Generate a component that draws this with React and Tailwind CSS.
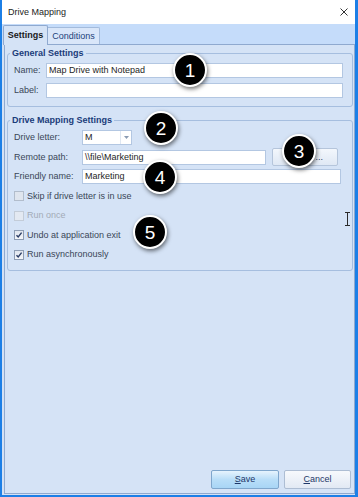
import React from 'react';

function TextBox({ value, className = '' }) {
    return (
        <div className={`h-[15px] bg-white border border-[#b3c7e2] flex items-center px-[2px] text-[#1e1e1e] ${className}`}>
            {value}
        </div>
    );
}

function CheckBox({ checked, disabled, label }) {
    return (
        <div className="h-[19.5px] flex items-center">
            <div
                className={`w-[10px] h-[10px] border flex items-center justify-center ${
                    disabled
                        ? 'border-[#c3ccd8] bg-[#e3e9f2]'
                        : checked
                        ? 'border-[#8e9db4] bg-gradient-to-b from-[#dfe5ee] to-[#f4f6fa]'
                        : 'border-[#b2bdcc] bg-[#dfe5ee]'
                }`}
            >
                {checked && (
                    <svg width="8" height="8" viewBox="0 0 8 8">
                        <path d="M1.5 4.2 L3.2 6 L6.6 1.6" fill="none" stroke="#2b3d66" strokeWidth="1.4" />
                    </svg>
                )}
            </div>
            <span className={`ml-[3px] ${disabled ? 'text-[#a3abb6]' : 'text-[#3a4656]'}`}>{label}</span>
        </div>
    );
}

function Row({ label, width, children }) {
    return (
        <div className="h-[19.5px] flex items-center">
            <span className={`text-[#3a4656] shrink-0 ${width}`}>{label}</span>
            {children}
        </div>
    );
}

export default function App() {
    return (
        <div className="w-[358px] h-[497px] bg-[#1c7fe6] pl-[2px] pr-[3px] pb-[2px] flex flex-col relative overflow-hidden font-[family-name:Liberation_Sans,Arial,sans-serif] text-[9px] leading-[11px]">
            {/* title bar */}
            <div className="h-[24px] shrink-0 bg-white flex items-center justify-between pl-[6px] pr-[7px]">
                <span className="text-[#1c1c1c] text-[9px]">Drive Mapping</span>
                <svg width="8" height="8" viewBox="0 0 8 8">
                    <path d="M0.5 0.5 L7.5 7.5 M7.5 0.5 L0.5 7.5" stroke="#333" strokeWidth="1" />
                </svg>
            </div>

            <div className="flex-1 bg-[#d3e1f5] flex flex-col">
                {/* tabs */}
                <div className="h-[20px] shrink-0 bg-[#c5dcfa] flex items-end pl-[1px]">
                    <div className="relative z-10 -mb-[1px] h-[20px] w-[45px] bg-[#d5e3f6] border border-b-0 border-[#8fa9cf] rounded-t-[2px] flex items-center justify-center font-bold text-[#1a1a1a]">
                        Settings
                    </div>
                    <div className="h-[17px] w-[52px] bg-[#d9e6f9] border border-b-0 border-l-0 border-[#a3bbdc] rounded-tr-[2px] flex items-center justify-center text-[#23427a]">
                        Conditions
                    </div>
                </div>

                {/* tab page */}
                <div className="flex-1 ml-[2px] mb-[1px] border border-[#8fa9cf] bg-[#d5e3f6] flex flex-col pl-[2px] pr-[1px] pt-[2px]">
                    <fieldset className="border border-[#a6bedf] rounded-[3px] pl-[6px] pr-[9px] pb-[6px]">
                        <legend className="-ml-[4px] px-[2px] font-bold text-[#1b3c7a] text-[9px] leading-[12px]">General Settings</legend>
                        <div className="mt-[2px]">
                            <Row label="Name:" width="w-[32px]">
                                <TextBox value="Map Drive with Notepad" className="flex-1" />
                            </Row>
                            <Row label="Label:" width="w-[32px]">
                                <TextBox value="" className="flex-1" />
                            </Row>
                        </div>
                    </fieldset>

                    <fieldset className="mt-[7px] border border-[#a6bedf] rounded-[3px] pl-[6px] pr-[11px] pb-[5px]">
                        <legend className="-ml-[4px] px-[2px] font-bold text-[#1b3c7a] text-[9px] leading-[12px]">Drive Mapping Settings</legend>
                        <div className="mt-[2px]">
                            <Row label="Drive letter:" width="w-[68px]">
                                <div className="h-[15px] w-[50px] bg-white border border-[#b3c7e2] flex items-center">
                                    <span className="flex-1 pl-[2px] text-[#1e1e1e]">M</span>
                                    <div className="w-[11px] h-full border-l border-[#dfe7f2] flex items-center justify-center">
                                        <svg width="5" height="3" viewBox="0 0 5 3">
                                            <path d="M0 0 H5 L2.5 3 Z" fill="#8a9bb3" />
                                        </svg>
                                    </div>
                                </div>
                            </Row>
                            <Row label="Remote path:" width="w-[68px]">
                                <TextBox value="\\file\Marketing" className="w-[184px]" />
                                <div className="ml-[6px] w-[66px] h-[18px] border border-[#b5c5db] rounded-[2px] bg-gradient-to-b from-[#f3f7fc] to-[#dfe8f4] flex items-center justify-end pr-[14px] text-[#1e3768]">
                                    ...
                                </div>
                            </Row>
                            <Row label="Friendly name:" width="w-[68px]">
                                <TextBox value="Marketing" className="flex-1" />
                            </Row>
                            <CheckBox label="Skip if drive letter is in use" />
                            <CheckBox label="Run once" disabled />
                            <CheckBox label="Undo at application exit" checked />
                            <CheckBox label="Run asynchronously" checked />
                        </div>
                    </fieldset>

                    <div className="mt-auto flex justify-end gap-[5px] pb-[4px] pr-[2px]">
                        <div className="w-[68px] h-[19px] border border-[#7fa6cc] rounded-[2px] bg-gradient-to-b from-[#e6f3fd] via-[#b9def8] to-[#a8d5f5] flex items-center justify-center text-[#1e3768]">
                            <span><span className="underline">S</span>ave</span>
                        </div>
                        <div className="w-[67px] h-[19px] border border-[#adbdd3] rounded-[2px] bg-gradient-to-b from-[#f7f9fc] to-[#e2e9f4] flex items-center justify-center text-[#1e3768]">
                            <span><span className="underline">C</span>ancel</span>
                        </div>
                    </div>
                </div>
            </div>

            {/* annotation badges */}
            <div className="absolute left-[173px] top-[53px] w-[34px] h-[34px] rounded-full bg-black border-[2.5px] border-white shadow-[1px_2px_4px_rgba(0,0,0,0.55)] flex items-center justify-center text-white text-[19px] leading-none">1</div>
            <div className="absolute left-[144px] top-[111px] w-[34px] h-[34px] rounded-full bg-black border-[2.5px] border-white shadow-[1px_2px_4px_rgba(0,0,0,0.55)] flex items-center justify-center text-white text-[19px] leading-none">2</div>
            <div className="absolute left-[282px] top-[134px] w-[34px] h-[34px] rounded-full bg-black border-[2.5px] border-white shadow-[1px_2px_4px_rgba(0,0,0,0.55)] flex items-center justify-center text-white text-[19px] leading-none">3</div>
            <div className="absolute left-[143px] top-[160px] w-[34px] h-[34px] rounded-full bg-black border-[2.5px] border-white shadow-[1px_2px_4px_rgba(0,0,0,0.55)] flex items-center justify-center text-white text-[19px] leading-none">4</div>
            <div className="absolute left-[133px] top-[215px] w-[34px] h-[34px] rounded-full bg-black border-[2.5px] border-white shadow-[1px_2px_4px_rgba(0,0,0,0.55)] flex items-center justify-center text-white text-[19px] leading-none">5</div>

            {/* text cursor */}
            <svg className="absolute left-[344px] top-[212px]" width="7" height="14" viewBox="0 0 7 14">
                <path d="M1 0.5 H6 M1 13.5 H6 M3.5 0.5 V13.5" stroke="#2a2a2a" strokeWidth="1" fill="none" />
            </svg>
        </div>
    );
}
